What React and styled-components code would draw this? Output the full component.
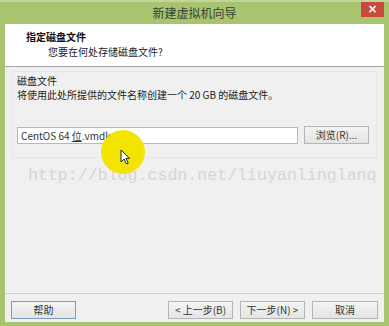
import React from 'react';
import styled, { createGlobalStyle } from 'styled-components';

const GlobalStyle = createGlobalStyle`
  html, body {
    margin: 0;
    padding: 0;
    overflow: hidden;
  }
  * {
    box-sizing: border-box;
  }
`;

const CJK = `"Noto Sans CJK SC", "Noto Sans", sans-serif`;

export default function App() {
  return (
    <>
      <GlobalStyle />
      <Window>
        <TitleBar>
          <span />
          <Title>新建虚拟机向导</Title>
          <CloseButton>×</CloseButton>
        </TitleBar>
        <Client>
          <Header>
            <HeaderTitle>指定磁盘文件</HeaderTitle>
            <HeaderSub>您要在何处存储磁盘文件?</HeaderSub>
          </Header>
          <Body>
            <Group>
              <GroupLabel>磁盘文件</GroupLabel>
              <Desc>将使用此处所提供的文件名称创建一个 20 GB 的磁盘文件。</Desc>
              <FileRow>
                <FileInput>
                  CentOS 64 <Composing>位</Composing>.vmdk
                </FileInput>
                <Button>浏览(R)...</Button>
              </FileRow>
            </Group>
          </Body>
          <Footer>
            <Button focused>帮助</Button>
            <Spacer />
            <Button>&lt; 上一步(B)</Button>
            <Button>下一步(N) &gt;</Button>
            <Button wide>取消</Button>
          </Footer>
        </Client>
        <Watermark>http://blog.csdn.net/liuyanlinglanq</Watermark>
        <Highlight />
        <Cursor viewBox="0 0 10 16" width="10" height="16">
          <path d="M1 1 L1 13 L4 10 L6.5 15 L8.3 14.2 L5.9 9.3 L9.6 9.3 Z" fill="#fff" stroke="#222" strokeWidth="1" strokeLinejoin="round" />
        </Cursor>
      </Window>
    </>
  );
}

const Window = styled.div`
  position: relative;
  width: 389px;
  height: 326px;
  background: #a9c46f;
  border-top: 2px solid #c3d59a;
  display: flex;
  flex-direction: column;
  font-family: ${CJK};
  overflow: hidden;
`;

const TitleBar = styled.div`
  height: 22px;
  display: grid;
  grid-template-columns: 1fr auto 1fr;
  align-items: start;
`;

const Title = styled.div`
  font-size: 12px;
  line-height: 22px;
  color: #3a4030;
`;

const CloseButton = styled.div`
  justify-self: end;
  margin-right: 5px;
  width: 23px;
  height: 15px;
  background: #c9493d;
  color: #fff;
  font-family: "DejaVu Sans", sans-serif;
  font-size: 12px;
  line-height: 14px;
  text-align: center;
  font-weight: bold;
`;

const Client = styled.div`
  flex: 1;
  margin: 0 5px 4px 5px;
  background: #f0f0f0;
  display: flex;
  flex-direction: column;
`;

const Header = styled.div`
  height: 43px;
  background: #ffffff;
  border-bottom: 1px solid #a5a5a5;
  padding: 5px 0 0 21px;
`;

const HeaderTitle = styled.div`
  font-size: 10px;
  line-height: 15px;
  font-weight: bold;
  color: #111;
`;

const HeaderSub = styled.div`
  font-size: 10px;
  line-height: 15px;
  margin-left: 22px;
  color: #222;
`;

const Body = styled.div`
  flex: 1;
  padding: 4px 7px;
`;

const Group = styled.div`
  border: 1px solid #e6e6e6;
  padding: 2px 6px 13px 4px;
`;

const GroupLabel = styled.div`
  font-size: 10px;
  line-height: 14px;
  color: #222;
`;

const Desc = styled.div`
  font-size: 10px;
  line-height: 14px;
  color: #222;
`;

const FileRow = styled.div`
  margin-top: 24px;
  display: flex;
  gap: 6px;
  align-items: center;
`;

const FileInput = styled.div`
  width: 281px;
  height: 17px;
  background: #fff;
  border: 1px solid #b8b8b8;
  padding-left: 3px;
  font-size: 10px;
  line-height: 15px;
  color: #333;
  white-space: nowrap;
`;

const Composing = styled.span`
  text-decoration: underline;
`;

const Button = styled.div`
  width: ${p => (p.wide ? '66px' : '65px')};
  height: 18px;
  border: 1px solid ${p => (p.focused ? '#7d9cc0' : '#b5b5b5')};
  background: linear-gradient(#f4f4f4, #e4e4e4);
  font-size: 10px;
  line-height: 16px;
  text-align: center;
  color: #333;
  white-space: nowrap;
`;

const Footer = styled.div`
  height: 29px;
  border-top: 1px solid #cfcfcf;
  display: flex;
  align-items: flex-start;
  gap: 7px;
  padding: 7px 6px 0 6px;
`;

const Spacer = styled.div`
  flex: 1;
`;

const Watermark = styled.div`
  position: absolute;
  left: 28px;
  top: 163px;
  font-family: "Liberation Mono", monospace;
  font-size: 16.6px;
  line-height: 22px;
  color: #d6d6d6;
  white-space: nowrap;
  pointer-events: none;
`;

const Highlight = styled.div`
  position: absolute;
  left: 101px;
  top: 128px;
  width: 44px;
  height: 44px;
  border-radius: 50%;
  background: radial-gradient(circle, #f2e400 60%, rgba(242, 228, 0, 0.85) 85%, rgba(242, 228, 0, 0) 100%);
  pointer-events: none;
`;

const Cursor = styled.svg`
  position: absolute;
  left: 120px;
  top: 147px;
`;
